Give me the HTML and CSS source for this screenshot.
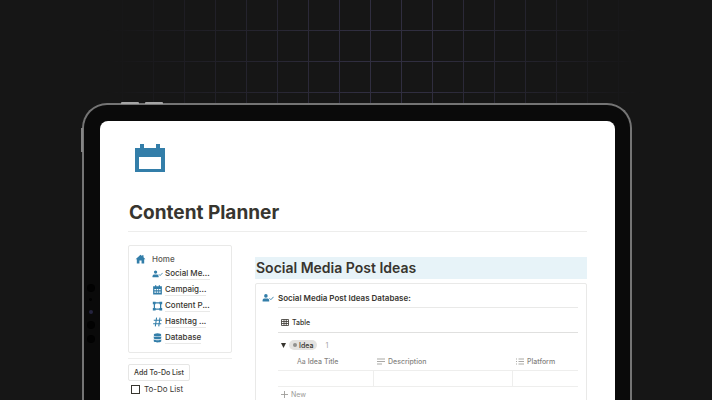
FILE: index.html
```html
<!DOCTYPE html>
<html lang="en">
<head>
    <meta charset="UTF-8">
    <meta name="viewport" content="width=device-width, initial-scale=1.0">
    <title>Content Planner</title>
    <link rel="stylesheet" href="styles.css">
</head>
<body>
    <svg width="0" height="0" class="symbols">
        <symbol id="user-check" viewBox="0 0 20 16">
            <circle cx="6.500" cy="4.500" r="3"/>
            <path d="M1 14v-2C1 10 2.500 9 4.500 9h4c2 0 3.500 1 3.500 3v2z"/>
            <path d="M12.500 8.500l2.300 2.300L19.300 6" fill="none" stroke="currentColor" stroke-width="1.500"/>
        </symbol>
    </svg>

    <div class="tablet">
        <span class="volume volume-up"></span>
        <span class="volume volume-down"></span>
        <span class="power"></span>
        <div class="camera"><i></i><i class="dot"></i><i class="lens"></i><i></i><i></i></div>

        <div class="screen">
            <svg class="page-icon" viewBox="0 0 30 28">
                <path fill-rule="evenodd" d="M5 0h4v4h12V0h4v4h5v24H0V4h5zM4 13v12h22V13z"/>
            </svg>
            <h1>Content Planner</h1>

            <div class="columns">
                <aside>
                    <nav class="nav-card">
                        <a class="home" href="#">
                            <svg viewBox="0 0 16 16"><path d="M8 1l2.500 2.300V1.800h2.300v3.600L15.800 8.300h-1.900V15H9.700v-4.500H6.300V15H2.100V8.300H.2z"/></svg>
                            Home
                        </a>
                        <a href="#"><svg viewBox="0 0 20 16"><use href="#user-check"/></svg><span>Social Me...</span></a>
                        <a href="#">
                            <svg viewBox="0 0 16 16"><path fill-rule="evenodd" d="M1 2h3V.5h2V2h4V.5h2V2h3v13H1zM3 6.500v2h2.500v-2zm3.700 0v2h2.600v-2zm3.800 0v2H13v-2zM3 10.500v2h2.500v-2zm3.700 0v2h2.600v-2zm3.800 0v2H13v-2z"/></svg>
                            <span>Campaig...</span>
                        </a>
                        <a href="#">
                            <svg viewBox="0 0 16 16"><path d="M3 3h10v10H3z" fill="none" stroke="currentColor" stroke-width="2"/><path d="M.5 1h4.500v4H.5zM11 1h4.500v4H11zM.5 11H5v4H.5zM11 11h4.500v4H11z"/></svg>
                            <span>Content P...</span>
                        </a>
                        <a href="#">
                            <svg viewBox="0 0 16 16"><path d="M6.500 1l-2 14M12 1l-2 14M2 5.300h13M1 10.700h13" fill="none" stroke="currentColor" stroke-width="1.700"/></svg>
                            <span>Hashtag ...</span>
                        </a>
                        <a href="#">
                            <svg viewBox="0 0 16 16"><ellipse cx="8" cy="3" rx="6" ry="2.500"/><path d="M2 5c2 2 10 2 12 0v3.200c-1 2.500-11 2.500-12 0zM2 10c2 2 10 2 12 0v3.200c-1 2.500-11 2.500-12 0z"/></svg>
                            <span>Database</span>
                        </a>
                    </nav>
                    <button class="add">Add To-Do List</button>
                    <label class="todo"><input type="checkbox">To-Do List</label>
                </aside>

                <main>
                    <h2>Social Media Post Ideas</h2>
                    <section class="database">
                        <h3><svg viewBox="0 0 20 16"><use href="#user-check"/></svg>Social Media Post Ideas Database:</h3>
                        <div class="view">
                            <button class="tab">
                                <svg viewBox="0 0 16 14"><path d="M1 1h14v12H1zM1 5h14M1 9h14M6 1v12M10.500 1v12" fill="none" stroke="currentColor" stroke-width="1.600"/></svg>
                                Table
                            </button>
                            <div class="group">
                                <svg class="arrow" viewBox="0 0 6 6"><path d="M0 0h6L3 6z"/></svg>
                                <span class="tag">Idea</span>
                                <span class="count">1</span>
                            </div>
                            <table>
                                <thead>
                                    <tr>
                                        <th class="col-title"><span class="aa">Aa</span> Idea Title</th>
                                        <th class="col-desc"><svg viewBox="0 0 16 14"><path d="M0 2h16M0 7h16M0 12h10" stroke="currentColor" stroke-width="1.400"/></svg>Description</th>
                                        <th class="col-platform"><svg viewBox="0 0 16 14"><path d="M0 2h2M5 2h11M0 7h2M5 7h11M0 12h2M5 12h11" stroke="currentColor" stroke-width="1.400"/></svg>Platform</th>
                                    </tr>
                                </thead>
                                <tbody>
                                    <tr><td></td><td></td><td></td></tr>
                                </tbody>
                            </table>
                            <button class="new">
                                <svg viewBox="0 0 8 8"><path d="M4 0v8M0 4h8" stroke="currentColor"/></svg>
                                New
                            </button>
                        </div>
                    </section>
                </main>
            </div>
        </div>
    </div>
</body>
</html>
```

FILE: styles.css
```css
* {
    box-sizing: border-box;
}
body {
    margin: 0;
    height: 100vh;
    overflow: hidden;
    padding: 103px 80px 0 82px;
    background: #161616;
    color: #37352f;
    font-family: Inter, "Liberation Sans", sans-serif;
    font-size: 8px;
    position: relative;
}
/* faint grid behind the tablet, fading out to the sides */
body::before {
    content: "";
    position: absolute;
    top: 0;
    left: 0;
    right: 0;
    height: 103px;
    background-image:
        linear-gradient(to right, #302e40 1px, transparent 1px),
        linear-gradient(to bottom, #302e40 1px, transparent 1px);
    background-size: 31px 31px;
    background-position: 29px 30px;
    -webkit-mask-image: linear-gradient(to right, transparent 15%, #000 50%, #000 60%, transparent 90%);
    mask-image: linear-gradient(to right, transparent 15%, #000 50%, #000 60%, transparent 90%);
}
.symbols {
    position: absolute;
}
svg {
    fill: currentColor;
    flex: none;
}
button {
    font: inherit;
    color: inherit;
    background: none;
    border: none;
    padding: 0;
}
a {
    color: inherit;
    text-decoration: none;
}

/* tablet */
.tablet {
    position: relative;
    border: 2px solid #747474;
    border-bottom: none;
    border-radius: 25px 25px 0 0;
    background: #0a0a0a;
    padding: 16px 15px 0 16px;
}
.volume {
    position: absolute;
    top: -3px;
    width: 18px;
    height: 2px;
    background: #a5a5a5;
    border-radius: 1px 1px 0 0;
}
.volume-up {
    left: 37px;
}
.volume-down {
    left: 61px;
}
.power {
    position: absolute;
    left: -3px;
    top: 23px;
    width: 2px;
    height: 24px;
    background: #858585;
}
.camera {
    position: absolute;
    left: 2px;
    top: 179px;
    width: 9px;
    display: flex;
    flex-direction: column;
    align-items: center;
    gap: 6px;
}
.camera i {
    width: 8px;
    height: 8px;
    border-radius: 50%;
    background: #020202;
}
.camera .dot {
    width: 3px;
    height: 3px;
}
.camera .lens {
    width: 4px;
    height: 4px;
    margin: 3px 0 1px;
    background: #25243f;
}
.screen {
    background: #fff;
    border-radius: 8px 8px 0 0;
    padding: 23px 28px 0;
    min-height: 300px;
}
.page-icon {
    display: block;
    width: 30px;
    height: 28px;
    margin-left: 7px;
    color: #337ea9;
}
h1 {
    margin: 28px 0 0;
    padding: 0 0 6px 1px;
    border-bottom: 1px solid #ededec;
    font-size: 19px;
    line-height: 25px;
    font-weight: 700;
}

.columns {
    display: flex;
    gap: 23px;
    padding-top: 13px;
}
aside {
    width: 104px;
    flex: none;
}
.nav-card {
    display: flex;
    flex-direction: column;
    border: 1px solid #e9e9e8;
    border-radius: 2px;
    padding: 6px 6px 6px 23px;
}
.nav-card a {
    display: flex;
    align-items: center;
    gap: 2px;
    height: 16px;
    font-weight: 500;
}
.nav-card a span {
    line-height: 11px;
    border-bottom: 1px solid #e9e9e8;
}
.nav-card svg {
    width: 11px;
    height: 10px;
    color: #337ea9;
}
.nav-card .home {
    height: 14px;
    margin-left: -17px;
    gap: 6px;
    color: #5b5954;
}
.add {
    display: block;
    position: relative;
    margin-top: 11px;
    height: 17px;
    padding: 0 5px;
    border: 1px solid #e6e6e5;
    border-radius: 2px;
    font-size: 7px;
    font-weight: 500;
}
.add::before {
    content: "";
    position: absolute;
    left: -1px;
    top: -7px;
    width: 104px;
    border-top: 1px solid #efefee;
}
.todo {
    display: flex;
    align-items: center;
    gap: 4px;
    margin-top: 3px;
    padding-left: 3px;
    line-height: 10px;
}
.todo input {
    appearance: none;
    width: 9px;
    height: 9px;
    margin: 0;
    border: 1px solid #37352f;
}

main {
    flex: 1;
    min-width: 0;
    padding-top: 12px;
}
h2 {
    margin: 0 0 4px;
    padding-left: 1px;
    background: #e7f3f8;
    font-size: 14px;
    line-height: 22px;
    font-weight: 600;
}
.database {
    border: 1px solid #e9e9e8;
    border-radius: 2px;
    padding: 8px 8px 20px 6px;
}
h3 {
    display: flex;
    align-items: center;
    gap: 4px;
    margin: 0;
    font-size: 8px;
    line-height: 12px;
    font-weight: 600;
}
h3 svg {
    width: 12px;
    height: 10px;
    color: #337ea9;
}
.view {
    margin: 3px 0 0 16px;
    border-top: 1px solid #e9e9e8;
}
.tab {
    display: flex;
    align-items: center;
    gap: 3px;
    width: 100%;
    height: 25px;
    padding: 4px 0 0 3px;
    border-bottom: 1px solid #e0e0df;
    font-size: 7px;
    font-weight: 500;
}
.tab svg {
    width: 8px;
    height: 7px;
}
.group {
    display: flex;
    align-items: center;
    padding: 7px 0 0 3px;
    font-size: 7px;
}
.arrow {
    width: 5px;
    height: 5px;
    margin-right: 3px;
}
.tag {
    display: flex;
    align-items: center;
    gap: 2px;
    height: 10px;
    padding: 0 4px;
    border-radius: 5px;
    background: #e3e2e0;
    font-weight: 500;
}
.tag::before {
    content: "";
    width: 4px;
    height: 4px;
    border-radius: 50%;
    background: #91918e;
}
.count {
    margin-left: 8px;
    color: #a3a29f;
}
table {
    width: 100%;
    margin-top: 4px;
    border-collapse: collapse;
    table-layout: fixed;
    color: #85847f;
    font-size: 7px;
}
th {
    height: 16px;
    padding: 0 4px;
    text-align: left;
    font-weight: 500;
    white-space: nowrap;
}
th svg {
    width: 8px;
    height: 7px;
    margin-right: 3px;
    vertical-align: -1px;
}
.col-title {
    width: 95px;
    padding-left: 19px;
}
.col-platform {
    width: 66px;
}
.aa {
    font-weight: 400;
}
td {
    height: 16px;
    border: 1px solid #eeeeed;
}
td:first-child {
    border-left: none;
}
td:last-child {
    border-right: none;
}
.new {
    display: flex;
    align-items: center;
    gap: 3px;
    height: 16px;
    padding-left: 3px;
    color: #9b9a97;
    font-size: 7px;
}
.new svg {
    width: 7px;
    height: 7px;
}
```
